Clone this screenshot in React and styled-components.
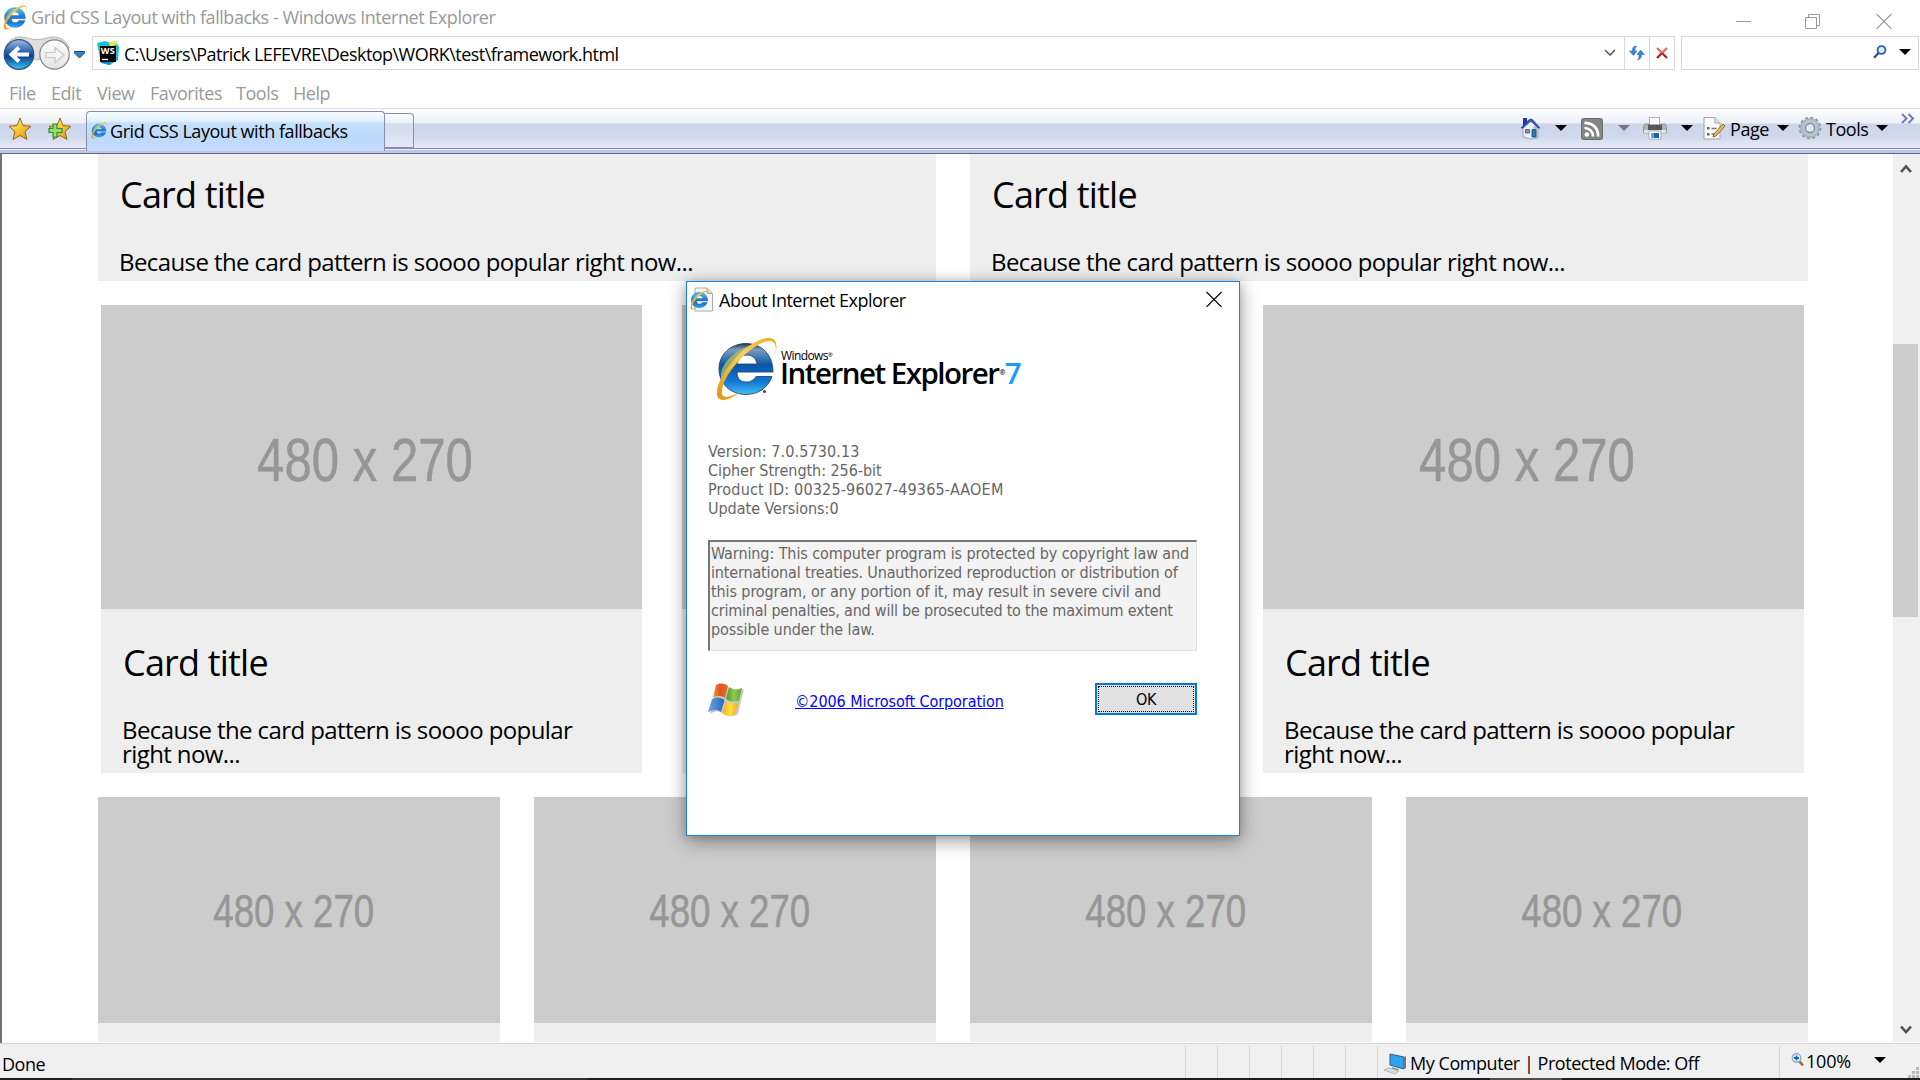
import React from 'react';
import styled, { createGlobalStyle } from 'styled-components';

const ui = '"Open Sans", "Noto Sans", sans-serif';
const tahoma = '"DejaVu Sans Condensed", "DejaVu Sans", sans-serif';

const Global = createGlobalStyle`
  * { box-sizing: border-box; }
  body { margin: 0; background: #fff; overflow: hidden; }
`;

const Label = styled.span`
  font-size: 18px;
  letter-spacing: ${p => p.$track ?? -0.45}px;
  color: ${p => p.$color || '#000'};
  white-space: nowrap;
  line-height: 24px;
`;
const Window = styled.div`
  position: relative;
  width: 1920px;
  height: 1080px;
  display: flex;
  flex-direction: column;
  background: #fff;
  font-family: ${ui};
  overflow: hidden;
  svg { display: block; flex: none; }
`;
const TitleBar = styled.header`
  height: 36px;
  display: flex;
  align-items: flex-start;
  padding: 5px 28px 0 3px;
`;
const TitleText = styled(Label)`margin: 0 auto 0 4px;`;
const WindowButtons = styled.div`
  display: flex;
  gap: 54px;
  padding-top: 8px;
`;
const AddressRow = styled.div`
  height: 34px;
  display: flex;
  align-items: flex-start;
  padding-left: 3px;
`;
const NavArrowSlot = styled.div`margin-left: 4px;`;
const AddressBox = styled.div`
  width: 1583px;
  height: 34px;
  margin-left: 7px;
  border: 1px solid #d9d9d9;
  display: flex;
  align-items: center;
  padding-left: 3px;
`;
const AddressText = styled(Label)`margin: 2px auto 0 4px;`;
const AddressButton = styled.div`
  width: 25px;
  height: 32px;
  border-left: 1px solid #d9d9d9;
  display: flex;
  align-items: center;
  justify-content: center;
`;
const Chevron = styled.div`margin-right: 8px;`;
const SearchBox = styled.div`
  width: 238px;
  height: 34px;
  margin-left: 6px;
  border: 1px solid #d9d9d9;
  display: flex;
  align-items: center;
  justify-content: flex-end;
  gap: 12px;
  padding: 0 7px 2px 0;
`;
const MenuBar = styled.nav`
  height: 39px;
  border-bottom: 1px solid #dcdcdc;
  display: flex;
  padding: 11px 0 0 9px;
`;
const MenuItem = styled(Label)`width: ${p => p.$w}px;`;
const TabBar = styled.div`
  height: 44px;
  display: flex;
  align-items: flex-start;
  background: linear-gradient(#fdfdff 0, #eef0f9 14px, #cdd5ea 15px, #d0d8ed 27px, #e6ebf8 39px, #7f879e 39px, #8c93a8 40px, #f4f6ff 40px, #e0e6fc 41px, #b9c6f3 41px, #b9c6f3 44px);
`;
const Favorites = styled.div`
  display: flex;
  gap: 16px;
  padding: 8px 0 0 8px;
  width: 86px;
`;
const ActiveTab = styled.div`
  width: 299px;
  height: 40px;
  margin-top: 2px;
  border: 1px solid #8790a8;
  border-bottom: 0;
  border-radius: 4px 4px 0 0;
  background: linear-gradient(#f6fbff 0, #e2f1fd 9px, #c5e0fc 11px, #bcd9fb 25px, #c4dbff 38px);
  display: flex;
  align-items: flex-start;
  gap: 3px;
  padding: 7px 0 0 4px;
`;
const TabIcon = styled.div`padding-top: 3px;`;
const NewTab = styled.div`
  width: 29px;
  height: 35px;
  margin-top: 4px;
  border: 1px solid #8790a8;
  border-left: 0;
  border-radius: 0 4px 0 0;
  background: linear-gradient(#fbfcff 0, #eceff9 9px, #d3daec 10px, #e4e9f7 34px);
`;
const Commands = styled.div`
  margin-left: auto;
  display: flex;
  align-items: flex-start;
  padding-right: 5px;
`;
const Slot = styled.div`
  width: ${p => p.$w}px;
  padding-top: ${p => p.$top}px;
  padding-left: ${p => p.$left || 0}px;
`;
const Triangle = styled.i`
  display: block;
  width: 0;
  height: 0;
  border: 6px solid transparent;
  border-top: 6px solid ${p => p.$color || '#000'};
  border-bottom: 0;
`;
const Body = styled.main`
  height: 890px;
  display: flex;
  border-top: 1px solid #696969;
  border-left: 2px solid #737373;
`;
const Page = styled.div`
  flex: 1;
  height: 888px;
  overflow: hidden;
  display: flex;
  flex-direction: column;
  gap: 24px;
`;
const CardRow = styled.section`
  display: grid;
  grid-template-columns: repeat(${p => p.$n}, ${p => p.$w}px);
  gap: ${p => p.$gap}px;
  padding-left: ${p => p.$left}px;
  flex: none;
`;
const CardBox = styled.article`
  background: #eee;
  min-height: ${p => p.$min || 0}px;
`;
const Placeholder = styled.div`
  height: ${p => p.$h}px;
  background: #ccc;
  display: flex;
  align-items: center;
  justify-content: center;
  font-family: "Liberation Sans", Arial, sans-serif;
  font-size: ${p => p.$size}px;
  color: #969696;
  span {
    white-space: nowrap;
    transform: translate(-0.115em, 0.047em) scaleX(0.805);
    -webkit-text-stroke: 0.5px #969696;
  }
`;
const CardBody = styled.div`
  padding: ${p => p.$top}px 60px 7px 21px;
`;
const CardTitle = styled.h2`
  margin: 0 0 33px 1px;
  font-size: 36px;
  font-weight: 400;
  line-height: 44px;
  letter-spacing: -0.8px;
`;
const CardText = styled.p`
  margin: 0;
  font-size: 24px;
  line-height: 24px;
  letter-spacing: -0.59px;
`;
const ScrollBar = styled.aside`
  width: 27px;
  height: 888px;
  background: #f0f0f0;
  display: flex;
  flex-direction: column;
  align-items: center;
  padding: 10px 2px 7px 0;
`;
const Thumb = styled.div`
  width: 25px;
  height: 273px;
  margin: 170px 0 auto;
  background: #cdcdcd;
`;
const StatusBar = styled.footer`
  height: 35px;
  display: flex;
  background: #f0f0f0;
  border-top: 1px solid #d4d4d4;
`;
const StatusText = styled(Label)`
  padding: ${p => p.$top}px 0 0 ${p => p.$left || 0}px;
`;
const Cells = styled.div`
  display: flex;
  margin-left: auto;
`;
const Cell = styled.div`
  width: ${p => p.$w}px;
  height: 32px;
  margin-top: 2px;
  border-left: 1px solid #d7d7d7;
  display: flex;
  align-items: flex-start;
`;
const TaskEdge = styled.div`
  height: 2px;
  background: linear-gradient(90deg, #1f1f22 72px, #303033 72px, #303033 588px, #1f1f22 588px, #1f1f22 1490px, #4f4f52 1490px, #4f4f52 1562px, #1f1f22 1562px);
`;

const Dialog = styled.div`
  position: absolute;
  left: 686px;
  top: 281px;
  width: 554px;
  height: 555px;
  border: 1px solid #1883d7;
  background: #fff;
  box-shadow: 0 5px 18px rgba(0, 0, 0, 0.38), 0 0 8px rgba(0, 0, 0, 0.14);
`;
const DialogHead = styled.div`
  height: 50px;
  display: flex;
  align-items: flex-start;
  padding: 5px 17px 0 3px;
`;
const DialogTitle = styled(Label)`margin: 1px auto 0 5px;`;
const CloseSlot = styled.div`padding-top: 4px;`;
const Brand = styled.div`
  display: flex;
  padding: 5px 0 0 28px;
  height: 102px;
`;
const BrandText = styled.div`
  padding: 12px 0 0 3px;
  color: #000;
`;
const BrandSmall = styled.div`
  padding-left: 1px;
  font-size: 12px;
  line-height: 14px;
  letter-spacing: -0.6px;
  sup { font-size: 6px; line-height: 0; vertical-align: 3px; }
`;
const BrandBig = styled.div`
  margin-top: -6px;
  font-size: 29.5px;
  font-weight: 600;
  line-height: 32px;
  letter-spacing: -1.5px;
  white-space: nowrap;
  sup { font-size: 7px; line-height: 0; vertical-align: 9px; margin: 0 1px; }
  b { color: #189dfb; font-weight: 600; }
`;
const Info = styled.div`
  padding: 8px 0 0 21px;
  height: 106px;
  font-family: ${tahoma};
  font-size: 16px;
  color: #666;
`;
const Line = styled.div`
  line-height: 19px;
  letter-spacing: ${p => p.$track}px;
  white-space: nowrap;
`;
const Warning = styled.div`
  width: 489px;
  height: 111px;
  margin-left: 21px;
  border: 1px solid #e0e0e0;
  border-top: 2px solid #767676;
  border-left: 2px solid #767676;
  background: #f3f3f3;
  padding: 2px 0 0 1px;
  font-family: ${tahoma};
  font-size: 16px;
  color: #666;
`;
const DialogFoot = styled.div`
  display: flex;
  align-items: flex-start;
  padding: 32px 42px 0 21px;
`;
const Copyright = styled.a`
  margin: 9px auto 0 50px;
  font-family: ${tahoma};
  font-size: 16px;
  line-height: 19px;
  letter-spacing: -0.07px;
  color: #00f;
  text-decoration: underline;
  white-space: nowrap;
`;
const OkButton = styled.div`
  width: 102px;
  height: 32px;
  border: 2px solid #0078d7;
  background: #e1e1e1;
  padding: 1px;
  font-family: ${tahoma};
  font-size: 16px;
  line-height: 26px;
  text-align: center;
  letter-spacing: -0.3px;
  span { display: block; height: 26px; border: 1px dotted #000; }
`;

function IeLogo({ w, h, id, mark }) {
  return (
    <svg width={w} height={h} viewBox="0 0 62 64">
      <defs>
        <linearGradient id={id} x1="0" y1="0" x2="0" y2="1">
          <stop offset="0" stopColor={mark ? '#27384f' : '#4db7ee'} />
          <stop offset=".12" stopColor={mark ? '#7c9dbe' : '#4db7ee'} />
          <stop offset=".42" stopColor={mark ? '#0b55a4' : '#1f7fd6'} />
          <stop offset=".75" stopColor="#1279d2" />
          <stop offset="1" stopColor={mark ? '#48bdf4' : '#35a8ee'} />
        </linearGradient>
        <linearGradient id={id + 'g'} x1="1" y1="0" x2="0" y2="1">
          <stop offset="0" stopColor="#f0a81c" />
          <stop offset=".4" stopColor="#fbd257" />
          <stop offset="1" stopColor="#e39310" />
        </linearGradient>
      </defs>
      <path fillRule="evenodd" fill={`url(#${id})`} stroke="#123f75" strokeWidth=".8"
        d="M31 6.500C46 6.500 58 17 58 35H22C22 42 26 45 31 45C36 45 39 43 41 39.500H57C53 51 43 57.500 31 57.500C16 57.500 4 47 4 32C4 17 16 6.500 31 6.500ZM22 27H42C41 21 37 18 32 18C27 18 23 21 22 27Z" />
      <path d="M6 38C7 24 21 14 36 8L29 15C18 22 9 34 6 46Z" fill="#b9c65c" opacity=".7" />
      <path fill={`url(#${id}g)`}
        d="M60 19C62 8 60 3 53 4C36 7 8 37 7 54C6 61 12 62 25 55C13 65 1 66 2 55C3 36 32 3 52 1C62 0 63 8 60 19Z" />
      {mark && <circle cx="49.500" cy="54.500" r="1.500" fill="#444" />}
    </svg>
  );
}

const WinMin = () => <svg width="15" height="16"><path d="M0 8.500h15" stroke="#999" /></svg>;
const WinMax = () => (
  <svg width="17" height="16" fill="none" stroke="#999"><path d="M.5 4.500h11v11H.5zM3.500 4.500v-3h11v11h-3" /></svg>
);
const WinClose = ({ color = '#999' }) => (
  <svg width="16" height="16" viewBox="0 0 16 16"><path d="M.5 1l15 15M15.500 1l-15 15" stroke={color} strokeWidth="1.100" /></svg>
);

const NavButtons = () => (
  <svg width="67" height="34" viewBox="0 0 67 34">
    <defs>
      <linearGradient id="nav" x1="0" y1="0" x2="0" y2="1">
        <stop offset="0" stopColor="#9dbce6" /><stop offset=".4" stopColor="#2d62ae" />
        <stop offset=".55" stopColor="#0b3d8e" /><stop offset="1" stopColor="#35c5f5" />
      </linearGradient>
      <linearGradient id="navf" x1="0" y1="0" x2="0" y2="1">
        <stop offset="0" stopColor="#fff" /><stop offset="1" stopColor="#e3e3e3" />
      </linearGradient>
    </defs>
    <path d="M2 12C6 3 12 .8 18 1C26 1.500 26 3.500 34 3.500C42 3.500 42 1.500 50 1C57 .8 63 4 66 12L50 18L34 24L18 18Z" fill="#dedede" stroke="#b4b4b4" />
    <circle cx="16" cy="18.500" r="14.800" fill="url(#nav)" stroke="#35507c" strokeWidth="1.200" />
    <path d="M26 18.500H9M16 11.500L8.500 18.500L16 25.500" fill="none" stroke="#fff" strokeWidth="4" />
    <circle cx="51.500" cy="18.500" r="14.700" fill="url(#navf)" stroke="#858585" strokeWidth="1.200" />
    <path d="M43 16.500h9v-5l9 7.500-9 7.500v-5h-9z" fill="#f5f5f5" stroke="#c6c6c6" strokeWidth="1.200" />
  </svg>
);
const NavArrow = () => (
  <svg width="11" height="34"><path d="M.5 15.500h10v1.500l-5 5-5-5z" fill="#2f86c4" stroke="#174a86" /></svg>
);
const WsIcon = () => (
  <svg width="24" height="25" viewBox="0 0 24 25">
    <path d="M1 2L9 0L15 2L20 0L23 6L22 19L14 24L5 22Z" fill="#12c4d6" />
    <path d="M13 1L20 0L22 3L14 6Z" fill="#e8e15a" />
    <path d="M4 19L16 20L13 24L6 22Z" fill="#1688d4" />
    <path d="M4 5H20V21H4z" fill="#050505" />
    <text x="4.800" y="13" fontFamily="Open Sans, sans-serif" fontSize="9" fontWeight="700" fill="#fff" textLength="14">WS</text>
    <path d="M6 18.500h6" stroke="#fff" strokeWidth="1.300" />
  </svg>
);
const STAR = 'M12 1L15 8.500L23 9.300L17 14.500L19 22.500L12 18.500L5 22.500L7 14.500L1 9.300L9 8.500Z';
const Star = ({ plus }) => (
  <svg width="24" height="25" viewBox="0 0 24 25">
    <defs><linearGradient id="star" x1="0" y1="0" x2="1" y2="1">
      <stop offset="0" stopColor="#fff0a0" /><stop offset=".5" stopColor="#f6c535" /><stop offset="1" stopColor="#d98d0c" />
    </linearGradient></defs>
    <path d={STAR} fill="url(#star)" stroke="#98691a" strokeWidth="1" />
    {plus && <path d="M5 7h4v4.500h5v4H9V20H5v-4.500H1v-4h4z" fill="#8fe070" stroke="#27922a" strokeWidth="1.200" />}
  </svg>
);
const Refresh = () => (
  <svg width="16" height="16" viewBox="0 0 16 16">
    <path d="M7.500 1C4 1 3.500 3 3.500 6H.5l4 4.500L8 6H6C6 4 6 3 7.500 1Z" fill="#3d86d6" stroke="#1f5fae" strokeWidth=".5" />
    <path d="M8.500 15C12 14 12.500 12 12.500 9.500H15.500l-4-4.500L8 9.500h2C10 12 10 13 8.500 15Z" fill="#3d86d6" stroke="#1f5fae" strokeWidth=".5" />
  </svg>
);
const Stop = () => (
  <svg width="12" height="12" viewBox="0 0 12 12">
    <path d="M1 1l4.500 4.500M11 1L6.500 5.500" stroke="#e0716a" strokeWidth="2.400" />
    <path d="M6 6L1 11M6 6l5 5" stroke="#ae2b24" strokeWidth="2.400" />
  </svg>
);
const Magnifier = () => (
  <svg width="14" height="14" viewBox="0 0 14 14" fill="none">
    <circle cx="8.500" cy="5" r="3.900" stroke="#2c64b8" strokeWidth="1.900" fill="#dff0ff" />
    <path d="M5.500 8L1 12.800" stroke="#2a5298" strokeWidth="2.400" />
  </svg>
);
const House = () => (
  <svg width="21" height="23" viewBox="0 0 21 23">
    <path d="M3 10L10 4L18 10V21L11 22L3 20Z" fill="#eceff2" stroke="#8b94a3" strokeWidth=".8" />
    <path d="M13 11v11l6-1V11L15 5Z" fill="#b9c3cd" />
    <path d="M3 1h4v5L3 9z" fill="#1b3aa8" />
    <path d="M1 11L9 2.500L12 2L20 11L18 11L11 4L3 11Z" fill="#3557b9" stroke="#28459a" strokeWidth=".7" />
    <path d="M5.500 12.500h4v3.500h-4z" fill="#8f9499" stroke="#555" strokeWidth=".8" />
    <path d="M12 12.500h4V20h-4z" fill="#2c79bb" stroke="#194d83" strokeWidth=".8" />
  </svg>
);
const Rss = () => (
  <svg width="22" height="22" viewBox="0 0 22 22" fill="none">
    <rect x=".5" y=".5" width="21" height="21" rx="2" fill="#858585" stroke="#696969" />
    <circle cx="5.800" cy="16.500" r="2.300" fill="#fff" />
    <path d="M3.500 10C8.500 10 12 13.500 12 18.500M3.500 4.800C12 4.800 17.200 10 17.200 18.500" stroke="#fff" strokeWidth="2.700" />
  </svg>
);
const Printer = () => (
  <svg width="24" height="23" viewBox="0 0 24 23">
    <path d="M6.500 .5h10V9h-10z" fill="#fff" stroke="#b0b0b0" />
    <path d="M2 7h4v2h12V7h4l1.500 2v7H.5V9z" fill="#b4b4b4" stroke="#8a8a8a" strokeWidth=".8" />
    <path d="M5 7.500h14v5.500H5z" fill="#575757" />
    <path d="M1 13h22v3H1z" fill="#e4e4e4" />
    <path d="M6 14h12v8H6z" fill="#fff" stroke="#9c9c9c" strokeWidth=".8" />
    <path d="M8 16h3v5H8z" fill="#41b6c8" /><path d="M11 16h5v5h-5z" fill="#1f63b4" />
  </svg>
);
const PageIcon = () => (
  <svg width="23" height="23" viewBox="0 0 23 23">
    <path d="M1 .5h11L17 6v16H1z" fill="#fbfbfb" stroke="#a5a5a5" />
    <path d="M12 .5V6h5" fill="#e3e3e3" stroke="#a5a5a5" />
    <path d="M4 10h2.500v2.500H4zM4 16h2.500v2.500H4z" fill="#54698d" />
    <path d="M8.500 11.500h5M8.500 17h3" stroke="#777" strokeWidth="1.300" />
    <path d="M20 7l2 2L13 19l-3 1 1-3z" fill="#eebc5d" stroke="#7c5a27" strokeWidth=".9" />
  </svg>
);
const Gear = () => (
  <svg width="24" height="24" viewBox="0 0 24 24" fill="none">
    <circle cx="12" cy="12" r="10" stroke="#8795a3" strokeWidth="2.600" strokeDasharray="2.900 2.330" />
    <circle cx="12" cy="12" r="7.600" stroke="#b5c3cf" strokeWidth="4.800" />
    <circle cx="12" cy="12" r="9" stroke="#93a2b0" strokeWidth=".7" />
    <circle cx="12" cy="12" r="4.500" stroke="#7b8b9a" strokeWidth="1.300" fill="#e0e8f2" />
  </svg>
);
const DoubleChevron = () => (
  <svg width="14" height="11" viewBox="0 0 14 11" fill="none"><path d="M1 1l4.500 4.500L1 10M7.500 1L12 5.500L7.500 10" stroke="#7d76b4" strokeWidth="2" /></svg>
);
const ScrollArrow = ({ down }) => (
  <svg width="12" height="10" viewBox="0 0 12 10" fill="none">
    <path d={down ? 'M1 1.500L6 7L11 1.500' : 'M1 8L6 2.500L11 8'} stroke="#505050" strokeWidth="2.600" />
  </svg>
);
const Computer = () => (
  <svg width="24" height="22" viewBox="0 0 24 22">
    <path d="M7 1l14 3v12L7 12z" fill="#2ba4f2" stroke="#3b5b7c" />
    <path d="M21 4l2-1v12l-2 1z" fill="#777" />
    <path d="M9 14l7 2-2 3-5-2z" fill="#8d99a5" />
    <path d="M1 17l5-2 10 3-4 3z" fill="#d9dde0" stroke="#a7adb3" strokeWidth=".8" />
  </svg>
);
const ZoomIcon = () => (
  <svg width="14" height="14" viewBox="0 0 14 14" fill="none">
    <path d="M8 8l4 4.500" stroke="#9a684a" strokeWidth="2.600" />
    <circle cx="5.500" cy="5" r="4.300" fill="#eaf5ff" stroke="#8aa1bd" strokeWidth="1.200" />
    <path d="M5.500 2.500v5M3 5h5" stroke="#1763b8" strokeWidth="1.800" />
  </svg>
);
const Grip = () => (
  <svg width="12" height="12" fill="#b9b9b9">
    <path d="M8 0h3v3H8zM4 4h3v3H4zM8 4h3v3H8zM0 8h3v3H0zM4 8h3v3H4zM8 8h3v3H8z" />
  </svg>
);
const Flag = () => (
  <svg width="37" height="37" viewBox="0 0 37 37">
    <defs>
      <linearGradient id="fr"><stop offset="0" stopColor="#f29a35" /><stop offset=".45" stopColor="#e0561e" /><stop offset="1" stopColor="#ee6b2c" /></linearGradient>
      <linearGradient id="fg"><stop offset="0" stopColor="#4f9b2a" /><stop offset=".5" stopColor="#8ccb4c" /><stop offset="1" stopColor="#5da632" /></linearGradient>
      <linearGradient id="fb"><stop offset="0" stopColor="#6ba6e4" /><stop offset="1" stopColor="#2766b8" /></linearGradient>
      <linearGradient id="fy"><stop offset="0" stopColor="#f0b51a" /><stop offset=".5" stopColor="#fddc49" /><stop offset="1" stopColor="#edac17" /></linearGradient>
    </defs>
    <path d="M8 4C13 1 17 2 21 5C26 8 31 7 36 6L30 31C24 35 18 33 14 30C9 27 5 29 2 31Z" fill="#888" opacity=".45" />
    <path d="M8 2C12 0 16 0 20 3L17 15C13 12 9 13 5 14Z" fill="url(#fr)" />
    <path d="M21 4C25 7 30 7 34 5L31 18C27 19 22 19 18 16Z" fill="url(#fg)" />
    <path d="M4 16C9 13.500 13 14 16.500 17L13 29C9 26 5 27 0 29Z" fill="url(#fb)" />
    <path d="M17.500 18C22 21 26 21 30.500 19.500L27 32C23 34 18 33 14 30Z" fill="url(#fy)" />
  </svg>
);
const DocIe = () => (
  <svg width="24" height="25" viewBox="0 0 24 25">
    <path d="M5 1h12l5.500 5.500V24H5z" fill="#f7f7f7" stroke="#aaa" />
    <path d="M17 1v5.500h5.500" fill="#ddd" stroke="#aaa" />
    <svg x="0" y="3" width="19" height="20"><IeLogo w="19" h="20" id="ied" /></svg>
  </svg>
);

const MENU = [['File', 42], ['Edit', 46], ['View', 53], ['Favorites', 86], ['Tools', 57], ['Help', 50]];
const INFO = [
  ['Version: 7.0.5730.13', 0.12],
  ['Cipher Strength: 256-bit', -0.05],
  ['Product ID: 00325-96027-49365-AAOEM', 0.18],
  ['Update Versions:0', -0.03],
];
const WARNING = [
  ['Warning: This computer program is protected by copyright law and', -0.09],
  ['international treaties. Unauthorized reproduction or distribution of', -0.16],
  ['this program, or any portion of it, may result in severe civil and', -0.1],
  ['criminal penalties, and will be prosecuted to the maximum extent', -0.22],
  ['possible under the law.', -0.1],
];

function Card({ image, size, top, min, children }) {
  return (
    <CardBox $min={min}>
      {image && <Placeholder $h={image} $size={size}><span>480 x 270</span></Placeholder>}
      {children && (
        <CardBody $top={top}>
          <CardTitle>Card title</CardTitle>
          <CardText>{children}</CardText>
        </CardBody>
      )}
    </CardBox>
  );
}

export default function App() {
  return (
    <Window>
      <Global />
      <TitleBar>
        <IeLogo w={24} h={25} id="ie1" />
        <TitleText $color="#999">Grid CSS Layout with fallbacks - Windows Internet Explorer</TitleText>
        <WindowButtons><WinMin /><WinMax /><WinClose /></WindowButtons>
      </TitleBar>
      <AddressRow>
        <NavButtons />
        <NavArrowSlot><NavArrow /></NavArrowSlot>
        <AddressBox>
          <WsIcon />
          <AddressText $track={-0.53}>C:\Users\Patrick LEFEVRE\Desktop\WORK\test\framework.html</AddressText>
          <Chevron>
            <svg width="12" height="8" fill="none"><path d="M1 1l5 5 5-5" stroke="#444" strokeWidth="1.300" /></svg>
          </Chevron>
          <AddressButton><Refresh /></AddressButton>
          <AddressButton><Stop /></AddressButton>
        </AddressBox>
        <SearchBox><Magnifier /><Triangle /></SearchBox>
      </AddressRow>
      <MenuBar>
        {MENU.map(([t, w]) => <MenuItem key={t} $w={w} $color="#999">{t}</MenuItem>)}
      </MenuBar>
      <TabBar>
        <Favorites><Star /><Star plus /></Favorites>
        <ActiveTab>
          <TabIcon><IeLogo w={16} h={17} id="ie2" /></TabIcon>
          <Label>Grid CSS Layout with fallbacks</Label>
        </ActiveTab>
        <NewTab />
        <Commands>
          <Slot $w={35} $top={8}><House /></Slot>
          <Slot $w={26} $top={16}><Triangle /></Slot>
          <Slot $w={37} $top={9}><Rss /></Slot>
          <Slot $w={25} $top={16}><Triangle $color="#777" /></Slot>
          <Slot $w={38} $top={8}><Printer /></Slot>
          <Slot $w={22} $top={16}><Triangle /></Slot>
          <Slot $w={27} $top={8}><PageIcon /></Slot>
          <Slot $w={47} $top={8}><Label>Page</Label></Slot>
          <Slot $w={21} $top={16}><Triangle /></Slot>
          <Slot $w={28} $top={7}><Gear /></Slot>
          <Slot $w={50} $top={8}><Label>Tools</Label></Slot>
          <Slot $w={25} $top={16}><Triangle /></Slot>
          <Slot $w={14} $top={4}><DoubleChevron /></Slot>
        </Commands>
      </TabBar>
      <Body>
        <Page>
          <CardRow $n={2} $w={838} $gap={34} $left={96}>
            {[0, 1].map(i => (
              <Card key={i} top={19}>Because the card pattern is soooo popular right now...</Card>
            ))}
          </CardRow>
          <CardRow $n={3} $w={541} $gap={40} $left={99}>
            {[0, 1, 2].map(i => (
              <Card key={i} image={304} size={61} top={32}>Because the card pattern is soooo popular<br />right now...</Card>
            ))}
          </CardRow>
          <CardRow $n={4} $w={402} $gap={34} $left={96}>
            {[0, 1, 2, 3].map(i => <Card key={i} image={226} size={45.5} min={245} />)}
          </CardRow>
        </Page>
        <ScrollBar><ScrollArrow /><Thumb /><ScrollArrow down /></ScrollBar>
      </Body>
      <StatusBar>
        <StatusText $left={2} $top={8}>Done</StatusText>
        <Cells>
          {[0, 1, 2, 3, 4, 5].map(i => <Cell key={i} $w={32} />)}
          <Cell $w={402}>
            <Slot $w={32} $top={7} $left={5}><Computer /></Slot>
            <StatusText $top={5}>My Computer | Protected Mode: Off</StatusText>
          </Cell>
          <Cell $w={141}>
            <Slot $w={26} $top={7} $left={11}><ZoomIcon /></Slot>
            <Slot $w={68} $top={3}><Label $track={-0.2}>100%</Label></Slot>
            <Slot $w={34} $top={11}><Triangle /></Slot>
            <Slot $w={12} $top={21}><Grip /></Slot>
          </Cell>
        </Cells>
      </StatusBar>
      <TaskEdge />

      <Dialog>
        <DialogHead>
          <DocIe />
          <DialogTitle $track={-0.5}>About Internet Explorer</DialogTitle>
          <CloseSlot><WinClose color="#000" /></CloseSlot>
        </DialogHead>
        <Brand>
          <IeLogo w={62} h={64} id="ieb" mark />
          <BrandText>
            <BrandSmall>Windows<sup>®</sup></BrandSmall>
            <BrandBig>Internet Explorer<sup>®</sup><b>7</b></BrandBig>
          </BrandText>
        </Brand>
        <Info>
          {INFO.map(([t, track]) => <Line key={t} $track={track}>{t}</Line>)}
        </Info>
        <Warning>
          {WARNING.map(([t, track]) => <Line key={t} $track={track}>{t}</Line>)}
        </Warning>
        <DialogFoot>
          <Flag />
          <Copyright>©2006 Microsoft Corporation</Copyright>
          <OkButton><span>OK</span></OkButton>
        </DialogFoot>
      </Dialog>
    </Window>
  );
}
